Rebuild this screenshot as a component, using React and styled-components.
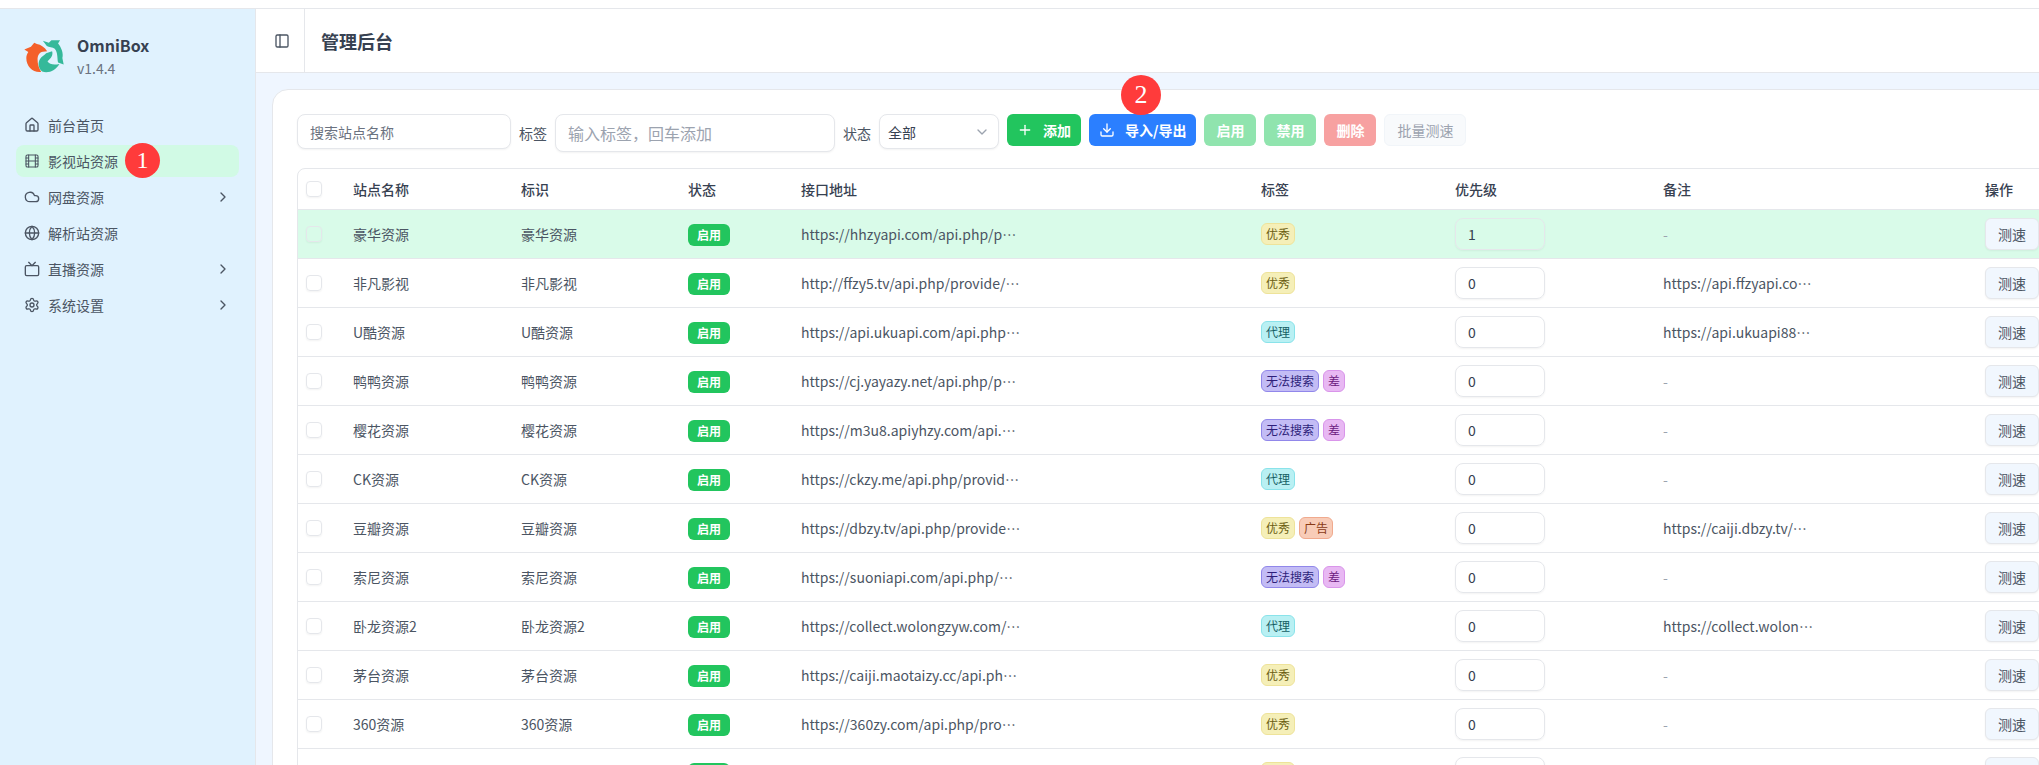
import React from 'react';
import styled, { createGlobalStyle } from 'styled-components';
import { ChevronDown, ChevronRight, Cloud, Download, Globe, House, PanelLeft, Plus, Settings, Tv } from 'lucide-react';

const GlobalStyle = createGlobalStyle`
  html, body {
    margin: 0;
    height: 765px;
    overflow: hidden;
    background: #fff;
    font-family: "Noto Sans CJK SC", "Noto Sans", sans-serif;
    font-size: 14px;
    color: #4b5563;
  }
  * { box-sizing: border-box; }
`;

const TopStrip = styled.div`
  height: 9px;
  background: #fff;
  border-bottom: 1px solid #e5e7eb;
`;
const Layout = styled.div`
  display: flex;
  height: 756px;
`;
const Sidebar = styled.aside`
  width: 256px;
  flex: none;
  background: #e0f2fe;
  border-right: 1px solid #e5e7eb;
  padding: 0 16px;
`;
const Brand = styled.div`
  display: flex;
  align-items: center;
  gap: 11px;
  height: 100px;
  padding: 0 0 6px 7px;
`;
const BrandName = styled.div`
  font-size: 16px;
  font-weight: 600;
  line-height: 22px;
  color: #374151;
`;
const BrandVersion = styled.div`
  margin-top: 2px;
  font-size: 14px;
  line-height: 20px;
  color: #6b7280;
`;
const Nav = styled.nav`
  display: flex;
  flex-direction: column;
  gap: 4px;
`;
const NavItem = styled.div`
  position: relative;
  display: flex;
  align-items: center;
  gap: 8px;
  height: 32px;
  padding: 0 8px;
  border-radius: 8px;
  line-height: 20px;
  color: #4b5563;
  background: ${p => (p.$active ? '#d1fae5' : 'transparent')};
  svg { flex: none; color: #4b5563; }
`;
const NavLabel = styled.span`
  flex: 1;
`;
const Marker = styled.div`
  position: absolute;
  left: ${p => p.$left}px;
  top: ${p => p.$top}px;
  width: ${p => p.$size}px;
  height: ${p => p.$size}px;
  border-radius: 50%;
  background: #ff3b3b;
  color: #fff;
  font-family: "Liberation Serif", serif;
  font-size: ${p => p.$font}px;
  font-weight: 400;
  line-height: ${p => p.$size}px;
  text-align: center;
  z-index: 2;
`;
const Content = styled.div`
  flex: 1;
  min-width: 0;
  display: flex;
  flex-direction: column;
  background: #eff6ff;
  overflow: hidden;
`;
const Header = styled.header`
  flex: none;
  display: flex;
  align-items: center;
  height: 64px;
  background: #fff;
  border-bottom: 1px solid #e5e7eb;
`;
const SideToggle = styled.div`
  width: 49px;
  align-self: stretch;
  display: flex;
  align-items: center;
  justify-content: center;
  padding-left: 3px;
  border-right: 1px solid #e5e7eb;
  color: #4b5563;
`;
const Title = styled.h1`
  margin: 0 0 0 16px;
  font-size: 18px;
  font-weight: 600;
  color: #374151;
`;
const Main = styled.main`
  flex: 1;
  padding: 16px 0 0 16px;
  overflow: hidden;
`;
const Card = styled.section`
  width: max-content;
  background: #fff;
  border: 1px solid #e5e7eb;
  border-radius: 16px 0 0 0;
  padding: 24px;
`;
const Toolbar = styled.div`
  display: flex;
  align-items: flex-start;
  gap: 8px;
  margin-bottom: 16px;
`;
const TextInput = styled.input`
  width: ${p => p.$width}px;
  height: ${p => p.$height}px;
  padding: 0 12px;
  background: #fff;
  border: 1px solid #e5e7eb;
  border-radius: 8px;
  box-shadow: 0 1px 2px rgba(0, 0, 0, 0.05);
  font: inherit;
  font-size: ${p => p.$font || 14}px;
  color: #374151;
  outline: none;
  &::placeholder { color: ${p => p.$hint || '#9ca3af'}; opacity: 1; }
`;
const FieldLabel = styled.span`
  line-height: 38px;
  color: #4b5563;
`;
const SelectBox = styled.div`
  width: 120px;
  height: 35px;
  display: flex;
  align-items: center;
  justify-content: space-between;
  padding: 0 8px;
  background: #fff;
  border: 1px solid #e5e7eb;
  border-radius: 8px;
  box-shadow: 0 1px 2px rgba(0, 0, 0, 0.05);
  color: #374151;
  svg { color: #9ca3af; }
`;
const ActionButton = styled.button`
  position: relative;
  display: flex;
  align-items: center;
  gap: ${p => (p.$icon ? 10 : 0)}px;
  height: 32px;
  padding: 0 ${p => (p.$icon ? 10 : 12)}px;
  background: ${p => p.$bg};
  color: #fff;
  border: 0;
  border-radius: 6px;
  font: inherit;
  font-weight: 600;
`;
const GhostButton = styled.button`
  height: 32px;
  padding: 0 12px;
  background: #f8fafc;
  color: #9ca3af;
  border: 1px solid #f1f5f9;
  border-radius: 6px;
  font: inherit;
`;
const TableBox = styled.div`
  border: 1px solid #e5e7eb;
  border-radius: 8px 0 0 0;
  overflow: hidden;
`;
const Table = styled.table`
  table-layout: fixed;
  width: 1792px;
  border-collapse: separate;
  border-spacing: 0;
`;
const Th = styled.th`
  height: 41px;
  padding: 0 16px;
  border-bottom: 1px solid #e5e7eb;
  text-align: left;
  font-weight: 500;
  color: #374151;
`;
const Td = styled.td`
  height: 49px;
  padding: 0 16px;
  border-bottom: 1px solid #e5e7eb;
  color: #4b5563;
  white-space: nowrap;
`;
const CheckCell = styled(Td)`
  padding: 0 8px;
`;
const CheckHead = styled(Th)`
  padding: 0 8px;
`;
const Row = styled.tr`
  background: ${p => (p.$active ? '#d9fbe9' : '#fff')};
`;
const CheckBox = styled.div`
  width: 16px;
  height: 16px;
  border: 1px solid #e5e7eb;
  border-radius: 4px;
  box-shadow: 0 1px 2px rgba(0, 0, 0, 0.05);
`;
const StatusBadge = styled.span`
  display: inline-block;
  height: 22px;
  padding: 0 9px;
  background: #22c55e;
  color: #fff;
  border-radius: 6px;
  font-size: 12px;
  font-weight: 700;
  line-height: 22px;
  vertical-align: middle;
`;
const Clip = styled.div`
  max-width: ${p => p.$max}px;
  overflow: hidden;
  text-overflow: ellipsis;
  white-space: nowrap;
`;
const Muted = styled.span`
  color: #9ca3af;
`;
const TagRow = styled.div`
  display: flex;
  gap: 4px;
`;
const tagColors = {
  优秀: ['#f5efb8', '#eee39a', '#6b5e12'],
  代理: ['#b9f0f3', '#8ae3ea', '#155e63'],
  无法搜索: ['#c3bcf5', '#9187ea', '#2e1f7a'],
  差: ['#e8b8f3', '#d995ea', '#6b1a80'],
  广告: ['#f8ccb8', '#f0aa8e', '#8a3a16'],
};
const Tag = styled.span`
  height: 22px;
  padding: 0 4px;
  border: 1px solid ${p => tagColors[p.$name][1]};
  border-radius: 6px;
  background: ${p => tagColors[p.$name][0]};
  color: ${p => tagColors[p.$name][2]};
  font-size: 12px;
  line-height: 20px;
`;
const RowButton = styled.button`
  width: 54px;
  height: 32px;
  padding: 0;
  background: #f1f7fe;
  border: 1px solid #e5e7eb;
  border-radius: 6px;
  box-shadow: 0 1px 2px rgba(0, 0, 0, 0.05);
  color: #4b5563;
  font: inherit;
  display: block;
`;
const PriorityInput = styled(TextInput)`
  display: block;
  background: transparent;
`;

const Logo = () => (
  <svg width="43" height="35" viewBox="40 55 130 105">
    <path fill="#f4602a" d="M44 86 L64 78 L74 66 L82 70 C94 72 106 80 113 92 L100 93 C90 94 84 104 84 116 C84 130 88 144 95 154 C70 157 50 138 50 112 C50 106 52 100 56 94 Z" />
    <path fill="#35b99a" d="M100 60 L118 66 L126 58 L152 58 L146 68 C156 80 163 98 159 112 L163 132 L146 126 C143 114 146 96 136 84 C130 80 118 80 112 76 Z" />
    <path fill="#35b99a" d="M110 98 L128 92 C132 104 124 114 114 122 C120 132 134 134 150 130 C140 148 118 160 98 153 C86 142 84 126 92 114 C96 108 104 104 110 98 Z" />
  </svg>
);

// lucide's current Film glyph differs from the strip shown here, so it is drawn by hand
const FilmStrip = () => (
  <svg width="16" height="16" viewBox="0 0 24 24" fill="none" stroke="currentColor" strokeWidth="1.6" strokeLinecap="round" strokeLinejoin="round">
    <rect x="3" y="3" width="18" height="18" rx="2" />
    <path d="M7 3v18M17 3v18M3 12h18M3 7.5h4M3 16.5h4M17 7.5h4M17 16.5h4" />
  </svg>
);

const menu = [
  { label: '前台首页', icon: House },
  { label: '影视站资源', icon: FilmStrip, active: true, marker: true },
  { label: '网盘资源', icon: Cloud, more: true },
  { label: '解析站资源', icon: Globe },
  { label: '直播资源', icon: Tv, more: true },
  { label: '系统设置', icon: Settings, more: true },
];

const sites = [
  { name: '豪华资源', url: 'https://hhzyapi.com/api.php/provide/vod', tags: ['优秀'], priority: 1, note: '-' },
  { name: '非凡影视', url: 'http://ffzy5.tv/api.php/provide/vod', tags: ['优秀'], priority: 0, note: 'https://api.ffzyapi.com/api.php/provide/vod' },
  { name: 'U酷资源', url: 'https://api.ukuapi.com/api.php/provide/vod', tags: ['代理'], priority: 0, note: 'https://api.ukuapi88.com/api.php/provide/vod' },
  { name: '鸭鸭资源', url: 'https://cj.yayazy.net/api.php/provide/vod', tags: ['无法搜索', '差'], priority: 0, note: '-' },
  { name: '樱花资源', url: 'https://m3u8.apiyhzy.com/api.php/provide/vod', tags: ['无法搜索', '差'], priority: 0, note: '-' },
  { name: 'CK资源', url: 'https://ckzy.me/api.php/provide/vod', tags: ['代理'], priority: 0, note: '-' },
  { name: '豆瓣资源', url: 'https://dbzy.tv/api.php/provide/vod', tags: ['优秀', '广告'], priority: 0, note: 'https://caiji.dbzy.tv/api.php/provide/vod' },
  { name: '索尼资源', url: 'https://suoniapi.com/api.php/provide/vod', tags: ['无法搜索', '差'], priority: 0, note: '-' },
  { name: '卧龙资源2', url: 'https://collect.wolongzyw.com/api.php/provide/vod', tags: ['代理'], priority: 0, note: 'https://collect.wolongzyw.com/api.php/provide/vod' },
  { name: '茅台资源', url: 'https://caiji.maotaizy.cc/api.php/provide/vod', tags: ['优秀'], priority: 0, note: '-' },
  { name: '360资源', url: 'https://360zy.com/api.php/provide/vod', tags: ['优秀'], priority: 0, note: '-' },
  { name: '', url: '', tags: ['优秀'], priority: 0, note: '' },
];

const columnWidths = [39, 168, 167, 113, 460, 194, 208, 322, 121];
const columns = ['站点名称', '标识', '状态', '接口地址', '标签', '优先级', '备注', '操作'];

export default function App() {
  return (
    <>
      <GlobalStyle />
      <TopStrip />
      <Layout>
        <Sidebar>
          <Brand>
            <Logo />
            <div>
              <BrandName>OmniBox</BrandName>
              <BrandVersion>v1.4.4</BrandVersion>
            </div>
          </Brand>
          <Nav>
            {menu.map(item => (
              <NavItem key={item.label} $active={item.active}>
                <item.icon size={16} />
                <NavLabel>{item.label}</NavLabel>
                {item.more && <ChevronRight size={16} />}
                {item.marker && <Marker $left={109} $top={-2} $size={35} $font={24}>1</Marker>}
              </NavItem>
            ))}
          </Nav>
        </Sidebar>
        <Content>
          <Header>
            <SideToggle><PanelLeft size={16} /></SideToggle>
            <Title>管理后台</Title>
          </Header>
          <Main>
            <Card>
              <Toolbar>
                <TextInput $width={214} $height={35} $hint="#6b7280" placeholder="搜索站点名称" />
                <FieldLabel>标签</FieldLabel>
                <TextInput $width={280} $height={38} $font={16} placeholder="输入标签，回车添加" />
                <FieldLabel>状态</FieldLabel>
                <SelectBox>全部<ChevronDown size={16} /></SelectBox>
                <ActionButton $icon $bg="#22c55e"><Plus size={16} />添加</ActionButton>
                <ActionButton $icon $bg="#2b7fff">
                  <Download size={16} />导入/导出
                  <Marker $left={32} $top={-39} $size={40} $font={26}>2</Marker>
                </ActionButton>
                <ActionButton $bg="#90e4ae">启用</ActionButton>
                <ActionButton $bg="#90e4ae">禁用</ActionButton>
                <ActionButton $bg="#f7a1a1">删除</ActionButton>
                <GhostButton>批量测速</GhostButton>
              </Toolbar>
              <TableBox>
                <Table>
                  <colgroup>
                    {columnWidths.map((width, i) => <col key={i} style={{ width }} />)}
                  </colgroup>
                  <thead>
                    <tr>
                      <CheckHead><CheckBox /></CheckHead>
                      {columns.map(title => <Th key={title}>{title}</Th>)}
                    </tr>
                  </thead>
                  <tbody>
                    {sites.map((site, i) => (
                      <Row key={i} $active={i === 0}>
                        <CheckCell><CheckBox /></CheckCell>
                        <Td>{site.name}</Td>
                        <Td>{site.name}</Td>
                        <Td><StatusBadge>启用</StatusBadge></Td>
                        <Td><Clip $max={220}>{site.url}</Clip></Td>
                        <Td>
                          <TagRow>
                            {site.tags.map(tag => <Tag key={tag} $name={tag}>{tag}</Tag>)}
                          </TagRow>
                        </Td>
                        <Td>
                          <PriorityInput $width={90} $height={32} defaultValue={site.priority} />
                        </Td>
                        <Td>
                          {site.note === '-' ? <Muted>-</Muted> : <Clip $max={150}>{site.note}</Clip>}
                        </Td>
                        <Td><RowButton>测速</RowButton></Td>
                      </Row>
                    ))}
                  </tbody>
                </Table>
              </TableBox>
            </Card>
          </Main>
        </Content>
      </Layout>
    </>
  );
}
